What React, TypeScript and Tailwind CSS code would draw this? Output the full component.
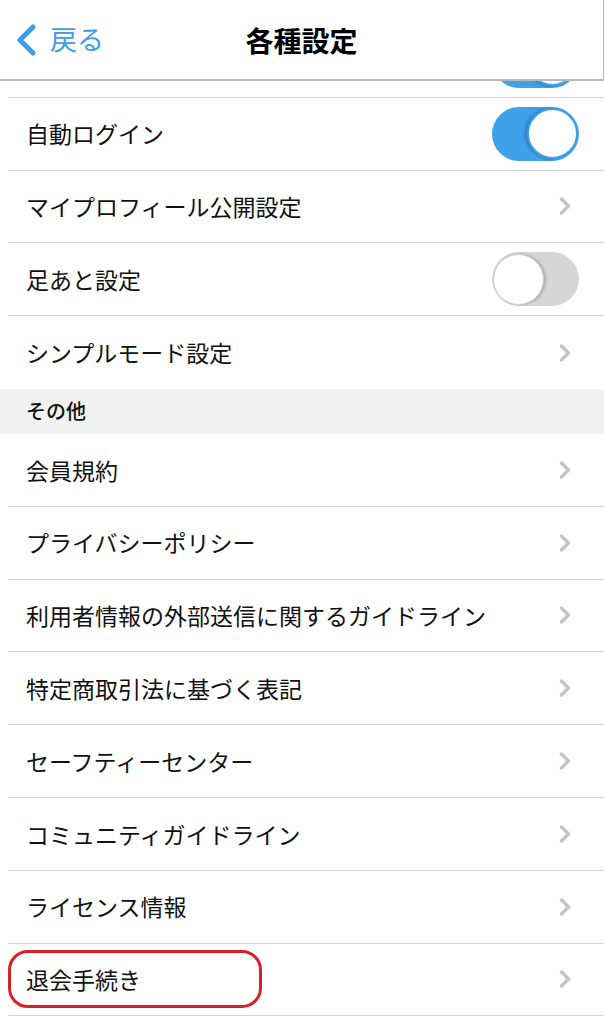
import { ChevronRight } from "lucide-react";

const font = { fontFamily: '"Noto Sans CJK JP", "Noto Sans", sans-serif' };

function Toggle({ on }: { on: boolean }) {
  return on ? (
    <div className="flex h-[54px] w-[87px] items-center justify-end rounded-full bg-[#3ea1ea] pr-[1px]">
      <div className="h-[51px] w-[51px] rounded-full border-2 border-[#3ea1ea] bg-white shadow-[-2px_0_3px_rgba(0,0,0,0.25)]" />
    </div>
  ) : (
    <div className="flex h-[54px] w-[87px] items-center justify-start rounded-full bg-[#d6d6d6] pl-[1px]">
      <div className="h-[51px] w-[51px] rounded-full border border-[#cfcfcf] bg-white shadow-[2px_0_3px_rgba(0,0,0,0.2)]" />
    </div>
  );
}

function Row({ label, toggle, circled, last }: { label: string; toggle?: boolean; circled?: boolean; last?: boolean }) {
  return (
    <div
      className={
        "relative ml-[8px] flex h-[72.8px] items-center pl-[18px] pr-[25px] " +
        (last ? "" : "border-b border-[#d3d3d3]")
      }
    >
      <span className="flex-1 text-[23px] text-[#111]">{label}</span>
      {toggle === undefined ? (
        <ChevronRight className="h-[28px] w-[28px] text-[#c4c4c4]" strokeWidth={3} />
      ) : (
        <Toggle on={toggle} />
      )}
      {circled && (
        <div className="absolute left-0 top-[6px] h-[58px] w-[254px] rounded-[20px] border-[3px] border-[#d9202a]" />
      )}
    </div>
  );
}

export default function App() {
  return (
    <div className="relative h-[1024px] w-[604px] overflow-hidden bg-white" style={font}>
      <div className="absolute left-0 top-0 z-10 flex h-[81px] w-full items-center border-b-2 border-r border-[#b8b8b8] bg-white">
        <div className="flex items-center pl-[14px] text-[#3e9ce8]">
          <svg width="24" height="32" viewBox="0 0 24 32" fill="none">
            <path d="M19 3 L6 16 L19 29" stroke="#3e9ce8" strokeWidth="5" strokeLinecap="round" strokeLinejoin="round" />
          </svg>
          <span className="ml-[12px] text-[27px]">戻る</span>
        </div>
        <div className="absolute left-0 right-0 text-center text-[28px] font-bold text-black">各種設定</div>
      </div>

      <div className="pt-[25px]">
        <div className="ml-[8px] flex h-[72.8px] items-center justify-end border-b border-[#d3d3d3] pr-[25px]">
          <Toggle on />
        </div>
        <Row label="自動ログイン" toggle />
        <Row label="マイプロフィール公開設定" />
        <Row label="足あと設定" toggle={false} />
        <Row label="シンプルモード設定" last />
        <div className="flex h-[45px] items-center bg-[#f1f1f1] pl-[26px] text-[20px] font-medium text-[#111]">その他</div>
        <Row label="会員規約" />
        <Row label="プライバシーポリシー" />
        <Row label="利用者情報の外部送信に関するガイドライン" />
        <Row label="特定商取引法に基づく表記" />
        <Row label="セーフティーセンター" />
        <Row label="コミュニティガイドライン" />
        <Row label="ライセンス情報" />
        <Row label="退会手続き" circled />
      </div>
    </div>
  );
}
